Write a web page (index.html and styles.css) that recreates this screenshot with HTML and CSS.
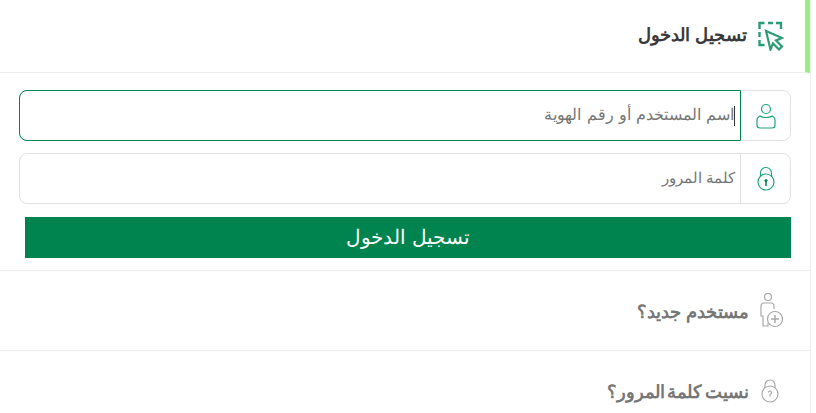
FILE: index.html
```html
<!DOCTYPE html>
<html lang="ar" dir="rtl">
<head>
  <meta charset="UTF-8" />
  <title>تسجيل الدخول</title>
  <link rel="stylesheet" href="styles.css">
</head>
<body>
  <div class="panel">
    <div class="panel-head">
      <svg class="head-icon" width="26" height="30" viewBox="0 0 26 30" fill="none" stroke="#2c9c76" stroke-width="2.400">
        <path d="M1.500 8V2h5M10 2h5M18 2h5v6M1.500 11v5M1.500 19v5h5"/>
        <path d="M8 10l16 7-6 2.500 6 6-3 3-6-6-2.500 6z" stroke-width="2.200"/>
      </svg>
      <h1 class="head-title">تسجيل الدخول</h1>
    </div>
    <form class="login-form">
      <div class="field">
        <span class="field-icon">
          <svg width="24" height="28" viewBox="0 0 24 28" fill="none" stroke="#1fa578" stroke-width="1.200">
            <circle cx="12" cy="7" r="4.500"/>
            <path d="M6 14c-2 1-3 2-3 4v5a3 3 0 0 0 3 3h12a3 3 0 0 0 3-3v-5c0-2-1-3-3-4-2 2-10 2-12 0z"/>
          </svg>
        </span>
        <div class="field-input focused"><span class="caret"></span><span class="hint hint-long">اسم المستخدم أو رقم الهوية</span></div>
      </div>
      <div class="field">
        <span class="field-icon">
          <svg width="20" height="26" viewBox="0 0 20 26" fill="none" stroke="#1fa578" stroke-width="1.200">
            <path d="M4.500 11V7a5.500 5.500 0 0 1 11 0v4"/>
            <circle cx="10" cy="16" r="8"/>
            <circle cx="10" cy="14.500" r="1.500" fill="#00844f" stroke="none"/>
            <path d="M10 15v5" stroke="#00844f" stroke-width="1.500"/>
          </svg>
        </span>
        <div class="field-input"><span class="hint">كلمة المرور</span></div>
      </div>
      <button class="submit-btn" type="button"><span class="submit-label">تسجيل الدخول</span></button>
    </form>
    <div class="link-row">
      <span class="link-icon">
        <svg width="24" height="38" viewBox="2 0 24 38" fill="none" stroke="#a9a9a9" stroke-width="1.200">
          <circle cx="10" cy="5" r="3.500"/>
          <path d="M3 14a3 3 0 0 1 3-3h7a3 3 0 0 1 3 3v3M3 14v10h2v10h5v-3"/>
          <circle cx="17" cy="27" r="7.500"/>
          <path d="M17 23v8M13 27h8" stroke-width="1.500"/>
        </svg>
      </span>
      <span class="link-text link-new">مستخدم جديد؟</span>
    </div>
    <div class="link-row">
      <span class="link-icon">
        <svg class="link-lock" width="20" height="26" viewBox="0 0 20 26" fill="none" stroke="#a9a9a9" stroke-width="1.200">
          <path d="M5 10V7a5 5 0 0 1 10 0v3"/>
          <circle cx="10" cy="16" r="8"/>
          <path d="M8.500 14.500a1.500 1.500 0 1 1 2.500 1.200l-1 .8v2"/>
        </svg>
      </span>
      <span class="link-text link-forgot">نسيت كلمة المرور؟</span>
    </div>
  </div>
</body>
</html>
```

FILE: styles.css
```css
html, body {
  margin: 0;
  padding: 0;
  height: 100%;
  overflow: hidden;
  background: #fff;
  font-family: "Noto Sans", "Open Sans", sans-serif;
}

.panel {
  width: 811px;
  margin-right: 5px;
  border-right: 1px solid #eee;
  box-sizing: border-box;
}

.panel-head {
  height: 73px;
  display: flex;
  align-items: center;
  gap: 11px;
  padding-right: 21px;
  border-right: 5px solid #98ee82;
  border-bottom: 1px solid #eee;
  box-sizing: border-box;
}

.head-title {
  margin: 0;
  padding-bottom: 4px;
  font-size: 18px;
  font-weight: 600;
  color: #3a3a3a;
}

.login-form {
  padding: 17px 19px 12px 25px;
  border-bottom: 1px solid #eee;
}

.field {
  display: flex;
  height: 51px;
  margin-bottom: 12px;
  margin-left: -6px;
  border: 1px solid #e2e2e2;
  border-radius: 8px;
  box-sizing: border-box;
}

.field-icon {
  width: 49px;
  display: flex;
  align-items: center;
  justify-content: center;
  border-left: 1px solid #e2e2e2;
}

.field-input {
  flex: 1;
  display: flex;
  align-items: center;
  padding-right: 5px;
  font-size: 15px;
  color: #777;
  border-radius: 8px 0 0 8px;
}

.field-input.focused {
  margin: -1px -1px -1px -1px;
  border: 1px solid #00844f;
  padding-right: 5px;
}

.hint {
  padding-bottom: 4px;
}

.hint-long {
  font-size: 16px;
  word-spacing: 1px;
}

.caret {
  width: 1px;
  height: 20px;
  background: #333;
}

.submit-btn {
  display: block;
  width: 100%;
  height: 41px;
  margin-top: 13px;
  padding: 0 0 2px;
  border: 0;
  background: #00844f;
  color: #fff;
  font-family: inherit;
  font-size: 20px;
}

.link-row {
  height: 79px;
  display: flex;
  align-items: center;
  gap: 7px;
  padding-right: 26px;
  border-bottom: 1px solid #eee;
}

.link-icon {
  width: 28px;
  display: flex;
}

.link-lock {
  margin-right: 4px;
}

.link-text {
  font-size: 18px;
  font-weight: 600;
  color: #777;
}

.link-new {
  font-size: 18.200px;
}

.link-forgot {
  word-spacing: -2px;
}
```
